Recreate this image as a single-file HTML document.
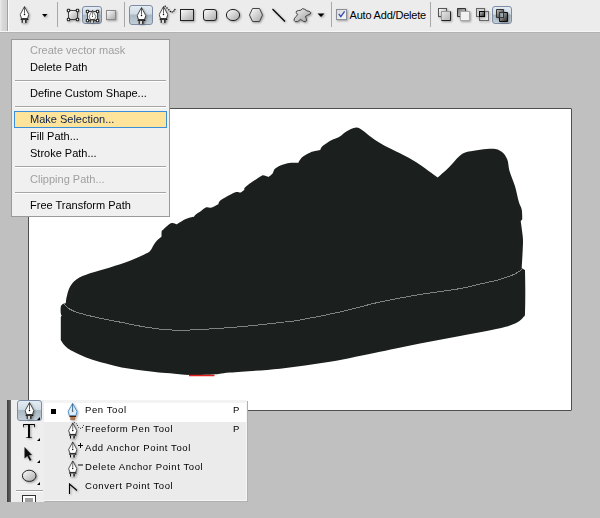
<!DOCTYPE html>
<html><head><meta charset="utf-8">
<style>
html,body{margin:0;padding:0;}
body{width:600px;height:518px;overflow:hidden;background:#c0c0c0;position:relative;font-family:"Liberation Sans",sans-serif;font-size:11px;color:#000;}
.abs{position:absolute;}
span,b{-webkit-font-smoothing:antialiased;will-change:transform;}
#toolbar{left:0;top:0;width:600px;height:31px;background:#ececec;border-bottom:1px solid #f6f6f6;}
#grip{left:0;top:0;width:7px;height:31px;background:linear-gradient(to right,#ececec 0,#dadada 2px,#d2d2d2 6px);}
#grip2{left:7px;top:0;width:1px;height:31px;background:#a2a2a2;}
#grip3{left:8px;top:0;width:1px;height:31px;background:#fafafa;}
.sep{position:absolute;top:2px;width:1px;height:25px;background:#a8a8a8;}
#canvas{left:28px;top:108px;width:542px;height:301px;background:#fff;border:1px solid #4f4f4f;border-radius:1px;}
#menu{left:11px;top:39px;width:157px;height:176px;background:#f0f0f0;border:1px solid #9a9a9a;}
.mi{position:absolute;left:0;width:156px;height:17px;line-height:17px;}
.mi span{position:absolute;left:17.5px;top:0;white-space:nowrap;}
.dis{color:#a0a0a0;}
.msep{position:absolute;left:3px;width:151px;height:1px;background:#a5a5a5;border-bottom:1px solid #fff;}
#hl{position:absolute;left:2px;top:71px;width:151px;height:15px;background:#fde49a;border:1px solid #3b8ed8;}
#tools{left:7px;top:400px;width:37px;height:102px;background:#eeeeee;}
#tstripe{left:7px;top:400px;width:4px;height:102px;background:linear-gradient(to right,#3c3c3c,#6a6a6a);}
#fly{left:44px;top:400px;width:203px;height:101px;background:#ebebeb;box-shadow:inset -1px -1px 0 #f6f6f6,1px 1px 0 #b0b0b0;}
.fi{position:absolute;left:0;width:203px;height:19px;font-size:9.5px;line-height:19px;}
.fi span{position:absolute;left:40.5px;top:-3px;white-space:nowrap;letter-spacing:0.6px;}
.fi b{position:absolute;left:189px;top:-3px;font-weight:normal;}
.btn{position:absolute;border:1px solid #7d8ca4;border-radius:3px;background:linear-gradient(to bottom,#e4ecf3 0,#d0dbe4 45%,#a9b8c3 50%,#c3ced6 100%);box-sizing:border-box;}
</style></head><body>
<svg width="0" height="0" style="position:absolute">
<defs>
<linearGradient id="gshape" x1="0" y1="0" x2="1" y2="1"><stop offset="0" stop-color="#ffffff"/><stop offset="1" stop-color="#a8a8a8"/></linearGradient>
<linearGradient id="gdark" x1="0" y1="0" x2="1" y2="1"><stop offset="0" stop-color="#c8c8c8"/><stop offset="1" stop-color="#202020"/></linearGradient>
<linearGradient id="gchk" x1="0" y1="0" x2="1" y2="1"><stop offset="0" stop-color="#d8d8d8"/><stop offset="1" stop-color="#fafafa"/></linearGradient>
<linearGradient id="gmid" x1="0" y1="0" x2="1" y2="1"><stop offset="0" stop-color="#e6e6e6"/><stop offset="1" stop-color="#b4b4b4"/></linearGradient>
<linearGradient id="gdark2" x1="0" y1="0" x2="1" y2="1"><stop offset="0" stop-color="#707070"/><stop offset="1" stop-color="#d8d8d8"/></linearGradient>
<linearGradient id="gblob" x1="0" y1="0" x2="1" y2="1"><stop offset="0" stop-color="#f4f4f4"/><stop offset="1" stop-color="#9a9a9a"/></linearGradient>
<filter id="sh" x="-30%" y="-30%" width="160%" height="160%"><feGaussianBlur in="SourceAlpha" stdDeviation="0.8"/><feOffset dx="1" dy="1"/><feComponentTransfer><feFuncA type="linear" slope="0.35"/></feComponentTransfer><feMerge><feMergeNode/><feMergeNode in="SourceGraphic"/></feMerge></filter>
<symbol id="pen" viewBox="0 0 10 17">
<path d="M5 0.5 L9.3 8.6 L7.9 12.6 L2.1 12.6 L0.7 8.6 Z" fill="#fff" stroke="#1a1a1a" stroke-width="0.75"/>
<path d="M5 1 V7.5" stroke="#1a1a1a" stroke-width="0.7"/>
<circle cx="5" cy="8.5" r="0.75" fill="#000"/>
<rect x="1.2" y="12.7" width="7.6" height="1.2" fill="#000"/>
<rect x="2.2" y="13.8" width="5.2" height="3.1" fill="#d8d8d8"/>
<rect x="2.2" y="13.8" width="1" height="3.1" fill="#000"/>
<rect x="5.6" y="13.8" width="1.6" height="3.1" fill="#222"/>
</symbol>
</defs>
</svg>

<div id="toolbar" class="abs"></div>
<div id="grip" class="abs"></div>
<div id="grip2" class="abs"></div>
<div id="grip3" class="abs"></div>
<div class="abs" style="left:0;top:32px;width:600px;height:1px;background:#b2b2b2"></div>
<div class="sep" style="left:57px"></div>
<div class="sep" style="left:124px"></div>
<div class="sep" style="left:331px"></div>
<div class="sep" style="left:430px"></div>
<div class="btn" style="left:82px;top:6px;width:20px;height:18px"></div>
<div class="btn" style="left:129px;top:5px;width:24px;height:20px"></div>
<div class="btn" style="left:492px;top:6px;width:20px;height:18px"></div>

<svg class="abs" style="left:0;top:0" width="600" height="32" viewBox="0 0 600 32">
<g filter="url(#sh)">
<use href="#pen" x="19.5" y="6" width="10" height="17"/>
<path d="M42 14 H47.5 L44.75 17 Z" fill="#000"/>
<!-- shape layers -->
<rect x="68.5" y="10.5" width="9" height="9" fill="url(#gshape)" stroke="#333" stroke-width="0.9"/>
<g fill="#fff" stroke="#262626" stroke-width="1.1"><rect x="67.3" y="9.3" width="2.4" height="2.4" rx=".8"/><rect x="76.3" y="9.3" width="2.4" height="2.4" rx=".8"/><rect x="67.3" y="18.3" width="2.4" height="2.4" rx=".8"/><rect x="76.3" y="18.3" width="2.4" height="2.4" rx=".8"/></g>
<!-- paths -->
<rect x="87.5" y="11.5" width="10" height="9" fill="#f4f4f4" stroke="#333" stroke-width="0.9"/>
<use href="#pen" x="88" y="9.8" width="9" height="13"/>
<g fill="#fff" stroke="#262626" stroke-width="1.1"><rect x="86.3" y="10.3" width="2.4" height="2.4" rx=".8"/><rect x="96.3" y="10.3" width="2.4" height="2.4" rx=".8"/><rect x="86.3" y="19.3" width="2.4" height="2.4" rx=".8"/><rect x="96.3" y="19.3" width="2.4" height="2.4" rx=".8"/></g>
<!-- fill pixels -->
<rect x="106.5" y="10.5" width="9" height="9" fill="url(#gshape)" stroke="#8a8a8a" stroke-width="1"/>
<use href="#pen" x="136.5" y="7" width="10" height="17"/>
<use href="#pen" x="158.5" y="6" width="10" height="17"/>
<g fill="#111"><circle cx="165.2" cy="6.3" r=".75"/><circle cx="167" cy="8.1" r=".75"/><circle cx="168.9" cy="9.8" r=".75"/><circle cx="170.4" cy="11.5" r=".75"/><circle cx="172.2" cy="12.1" r=".75"/><circle cx="173.8" cy="11.1" r=".75"/><circle cx="174.9" cy="9.5" r=".75"/></g>
<rect x="180.5" y="9.5" width="13" height="11" fill="url(#gshape)" stroke="#222" stroke-width="1"/>
<rect x="203.5" y="9.5" width="13" height="11" rx="2.5" fill="url(#gshape)" stroke="#222" stroke-width="1"/>
<ellipse cx="233" cy="15" rx="6.6" ry="5.6" fill="url(#gshape)" stroke="#222" stroke-width="1"/>
<path d="M252.5 8.5 H259.5 L262.5 15 L259.5 21.5 H252.5 L249.5 15 Z" fill="url(#gshape)" stroke="#444" stroke-width="1"/>
<path d="M272.5 9 L285 21.5" stroke="#000" stroke-width="1.2"/>
<path d="M296.5 11.2 Q298.5 10.4 300.8 10.2 Q302.5 7.4 304.8 9.4 Q306.2 11 309.8 11.6 Q311.8 12.8 310 14.2 Q307 15.2 305.4 16.5 Q307.6 20.3 305.4 21.8 Q303.6 22.2 300.6 19.4 Q297.5 22.6 295.2 21.6 Q293 20.6 294.6 18.2 Q296.4 16.4 297.6 14.6 Q295.4 12.2 296.5 11.2 Z" fill="url(#gblob)" stroke="#333" stroke-width="0.9"/>
<path d="M317.5 13.5 H324.5 L321 17 Z" fill="#000"/>
<!-- checkbox -->
<rect x="336.5" y="9.5" width="10" height="10" fill="url(#gchk)" stroke="#8a8f96" stroke-width="1"/>
<path d="M338.8 13.8 L340.8 16.6 L344.6 11.3" fill="none" stroke="#3048b0" stroke-width="1.3"/>
<!-- path ops -->
<rect x="438.5" y="8.5" width="8" height="8" fill="url(#gshape)" stroke="#555" stroke-width="1"/>
<rect x="441.5" y="11.5" width="9" height="9" fill="url(#gmid)" stroke="#9a9a9a" stroke-width="1"/>
<path d="M450.5 11.5 V20.5 H441.5" fill="none" stroke="#222" stroke-width="1"/>
<path d="M457.5 8.5 H465.5 V11.5 H460.5 V16.5 H457.5 Z" fill="url(#gdark2)" stroke="#333" stroke-width="1"/>
<rect x="460.5" y="11.5" width="9" height="9" fill="#f2f2f2" stroke="#a8a8a8" stroke-width="1"/>
<rect x="476.5" y="8.5" width="8" height="8" fill="none" stroke="#666" stroke-width="1"/>
<rect x="479.5" y="11.5" width="9" height="9" fill="none" stroke="#666" stroke-width="1"/>
<rect x="479.5" y="11.5" width="5" height="5" fill="url(#gdark)" stroke="#000" stroke-width="1"/>
<path d="M496.5 9.5 H503.5 V12.5 H499.5 V17.5 H496.5 Z" fill="url(#gdark)" stroke="#333" stroke-width="1"/>
<path d="M503.5 12.5 H507.5 V21.5 H499.5 V17.5 H503.5 Z" fill="url(#gdark)" stroke="#111" stroke-width="1"/>
<rect x="499.5" y="12.5" width="4" height="5" fill="none" stroke="#333" stroke-width="1"/>
</g>
</svg>
<div class="abs" style="left:349.5px;top:8px;line-height:14px;font-size:11px;white-space:nowrap;letter-spacing:-0.2px"><span>Auto Add/Delete</span></div>

<div id="canvas" class="abs"></div>
<svg class="abs" style="left:0;top:0" width="600" height="518" viewBox="0 0 600 518">
<path d="M65.8 303.3 C65.8 303.3 66.0 299.5 66.7 296.7 C67.4 293.9 68.3 289.6 70.0 286.7 C71.7 283.8 73.4 281.4 76.7 279.2 C80.0 277.0 84.5 275.2 90.0 273.3 C95.5 271.4 103.3 269.6 110.0 267.5 C116.7 265.4 123.9 263.2 130.0 260.8 C136.1 258.4 143.2 255.1 146.7 253.3 C150.2 251.5 149.7 251.3 150.8 250.0 C151.9 248.7 152.5 246.8 153.5 245.2 C154.5 243.6 155.7 242.0 157.0 240.6 C158.3 239.2 161.6 236.5 161.6 236.5 C161.6 236.5 161.4 233.5 161.6 232.4 C161.8 231.3 161.1 231.6 162.7 230.1 C164.2 228.6 168.6 224.2 170.9 223.2 C173.2 222.2 176.7 224.3 176.7 224.3 C176.7 224.3 179.6 222.4 181.3 221.4 C183.0 220.4 185.0 219.3 187.1 218.5 C189.2 217.7 194.0 216.8 194.0 216.8 C194.0 216.8 194.6 215.5 195.8 214.5 C197.0 213.5 199.3 212.2 201.0 211.0 C202.7 209.8 204.0 208.1 205.8 207.5 C207.6 206.9 209.5 208.1 211.6 207.5 C213.7 206.9 218.5 204.0 218.5 204.0 C218.5 204.0 218.2 201.9 220.9 200.0 C223.6 198.1 231.5 193.7 234.8 192.4 C238.1 191.1 239.0 192.9 240.6 192.4 C242.2 191.9 244.6 189.5 244.6 189.5 C244.6 189.5 243.2 188.9 245.8 186.7 C248.4 184.5 257.4 178.3 260.4 176.4 C263.4 174.5 262.5 175.3 263.9 175.4 C265.2 175.5 268.5 176.9 268.5 176.9 C268.5 176.9 271.5 174.8 272.6 173.5 C273.7 172.2 273.3 170.2 274.9 168.8 C276.5 167.4 280.0 165.8 282.4 164.8 C284.8 163.8 286.8 163.3 289.4 163.0 C292.0 162.7 298.1 163.0 298.1 163.0 C298.1 163.0 300.1 159.0 302.1 157.2 C304.2 155.4 307.4 153.6 310.4 152.4 C313.4 151.2 320.3 150.1 320.3 150.1 C320.3 150.1 320.8 147.7 322.6 146.1 C324.4 144.5 328.5 141.9 331.3 140.3 C334.1 138.8 337.1 138.2 339.4 136.8 C341.7 135.5 343.3 133.5 345.2 132.2 C347.1 130.9 349.1 129.8 351.0 129.0 C352.9 128.2 354.9 127.4 356.7 127.5 C358.5 127.6 359.2 128.0 361.7 129.7 C364.2 131.4 368.1 134.9 371.7 137.5 C375.3 140.1 378.6 142.4 383.3 145.0 C388.0 147.6 394.4 150.4 400.0 153.3 C405.6 156.2 412.0 159.6 416.7 162.5 C421.4 165.4 424.8 168.3 428.3 170.8 C431.8 173.3 437.6 177.6 437.6 177.6 C437.6 177.6 445.7 170.5 449.3 167.0 C452.9 163.5 455.8 159.0 459.0 156.4 C462.2 153.8 463.1 152.9 468.6 151.6 C474.1 150.3 486.3 148.7 491.8 148.7 C497.3 148.7 498.8 149.8 501.4 151.6 C504.0 153.4 505.8 156.1 507.2 159.3 C508.6 162.5 508.2 166.4 509.5 170.9 C510.8 175.4 513.5 181.2 515.0 186.3 C516.5 191.5 517.7 197.9 518.8 201.8 C519.9 205.7 521.1 206.6 521.7 209.5 C522.3 212.4 522.3 219.2 522.3 219.2 C522.3 219.2 520.7 221.1 520.7 221.1 C520.7 221.1 521.9 229.5 522.3 232.7 C522.7 235.8 522.9 237.1 523.0 240.0 C523.1 242.9 522.9 245.3 522.7 250.0 C522.5 254.7 521.7 268.3 521.7 268.3 C521.7 268.3 525.0 270.0 525.0 270.0 C525.0 270.0 525.3 282.8 525.3 290.0 C525.3 297.2 525.3 308.8 525.0 313.3 C524.7 317.8 524.8 315.5 523.5 317.0 C522.2 318.5 520.9 320.6 517.0 322.5 C513.1 324.4 509.5 325.9 500.0 328.2 C490.5 330.4 473.3 333.4 460.0 336.0 C446.7 338.6 433.3 340.9 420.0 343.5 C406.7 346.1 395.0 348.8 380.0 351.8 C365.0 354.9 346.7 359.0 330.0 361.8 C313.3 364.6 296.7 366.9 280.0 368.7 C263.3 370.5 241.1 371.6 230.0 372.6 C218.9 373.6 220.0 374.2 213.3 374.6 C206.6 375.0 197.2 375.2 190.0 375.0 C182.8 374.8 175.8 373.8 170.0 373.3 C164.2 372.8 160.3 372.6 155.0 372.0 C149.7 371.4 143.9 370.8 138.3 370.0 C132.8 369.2 127.2 368.6 121.7 367.5 C116.2 366.4 110.6 364.8 105.0 363.3 C99.4 361.8 93.8 360.4 88.3 358.3 C82.8 356.2 75.6 352.9 71.7 350.8 C67.8 348.7 66.8 347.6 65.0 345.8 C63.2 344.0 60.8 340.0 60.8 340.0 C60.8 340.0 60.8 317.0 60.8 317.0 C60.8 317.0 61.7 315.8 61.7 315.8 C61.7 315.8 60.9 314.8 60.8 313.3 C60.6 311.8 60.5 308.2 60.8 306.7 C61.1 305.2 61.7 304.8 62.5 304.2 C63.3 303.6 65.8 303.3 65.8 303.3Z" fill="#1b1f1e"/>
<path d="M64.5 304.5 C65.4 305.3 67.4 307.8 70.0 309.3 C72.6 310.8 75.0 311.8 80.0 313.3 C85.0 314.8 93.3 316.7 100.0 318.2 C106.7 319.7 113.3 320.8 120.0 322.1 C126.7 323.4 133.3 324.9 140.0 326.1 C146.7 327.3 153.3 328.4 160.0 329.1 C166.7 329.8 173.3 330.2 180.0 330.3 C186.7 330.4 193.3 329.8 200.0 329.5 C206.7 329.2 211.7 328.9 220.0 328.3 C228.3 327.7 240.0 326.8 250.0 325.8 C260.0 324.8 271.7 323.5 280.0 322.5 C288.3 321.5 290.0 321.8 300.0 320.0 C310.0 318.2 330.0 314.2 340.0 312.0 C350.0 309.8 353.3 308.7 360.0 307.0 C366.7 305.3 370.0 304.1 380.0 302.0 C390.0 299.9 406.7 296.7 420.0 294.5 C433.3 292.3 450.0 290.4 460.0 288.6 C470.0 286.9 473.3 285.5 480.0 284.0 C486.7 282.5 494.2 281.1 500.0 279.4 C505.8 277.7 511.3 275.6 515.0 273.9 C518.7 272.2 520.8 270.1 522.0 269.3" fill="none" stroke="#7f8281" stroke-width="1" shape-rendering="crispEdges"/>
<line x1="189" y1="375.5" x2="214.5" y2="375.5" stroke="#e02020" stroke-width="1.5"/>
</svg>

<div id="menu" class="abs">
<div class="mi dis" style="top:2px"><span>Create vector mask</span></div>
<div class="mi" style="top:19px"><span>Delete Path</span></div>
<div class="msep" style="top:40px"></div>
<div class="mi" style="top:45px"><span>Define Custom Shape...</span></div>
<div class="msep" style="top:66px"></div>
<div id="hl"></div>
<div class="mi" style="top:71px;color:#0c2148"><span>Make Selection...</span></div>
<div class="mi" style="top:88px"><span>Fill Path...</span></div>
<div class="mi" style="top:105px"><span>Stroke Path...</span></div>
<div class="msep" style="top:126px"></div>
<div class="mi dis" style="top:131px"><span>Clipping Path...</span></div>
<div class="msep" style="top:152px"></div>
<div class="mi" style="top:157px"><span>Free Transform Path</span></div>
</div>

<div id="tools" class="abs"></div>
<div id="tstripe" class="abs"></div>
<div class="btn" style="left:17px;top:400px;width:25px;height:21px"></div>
<div class="abs" style="left:16px;top:490px;width:27px;height:1px;background:#a0a0a0;border-bottom:1px solid #fff"></div>
<svg class="abs" style="left:0;top:400px" width="44" height="102" viewBox="0 400 44 102">
<g filter="url(#sh)">
<use href="#pen" x="24.5" y="402" width="10" height="17"/>
<text x="22.8" y="438" font-family="Liberation Serif" font-size="20" textLength="12.5" lengthAdjust="spacingAndGlyphs" fill="#000">T</text>
<path d="M24.5 447 L32 455 L28.8 455.3 L31.5 460 L29.8 460.8 L27.3 456 L24.5 458.5 Z" fill="#111"/>
<ellipse cx="29.2" cy="475.8" rx="6.8" ry="5.6" fill="url(#gshape)" stroke="#222" stroke-width="1"/>
</g>
<g fill="#000"><path d="M37 420 L40 417 V420 Z"/><path d="M37 441 L40 438 V441 Z"/><path d="M37 463 L40 460 V463 Z"/><path d="M37 485 L40 482 V485 Z"/></g>
<rect x="22.5" y="495.5" width="13" height="9" fill="#fff" stroke="#333"/>
<rect x="25" y="498.5" width="8" height="1" fill="#444"/><rect x="25" y="500.5" width="8" height="1" fill="#444"/>
</svg>

<div id="fly" class="abs">
<div class="abs" style="left:0;top:0;width:202px;height:3px;background:#f3f3f3"></div>
<div class="fi" style="top:3px;background:#fff;width:202px"><span>Pen Tool</span><b>P</b></div>
<div class="fi" style="top:22px"><span>Freeform Pen Tool</span><b>P</b></div>
<div class="fi" style="top:41px"><span>Add Anchor Point Tool</span></div>
<div class="fi" style="top:60px"><span>Delete Anchor Point Tool</span></div>
<div class="fi" style="top:79px"><span>Convert Point Tool</span></div>
</div>
<svg class="abs" style="left:44px;top:400px" width="203" height="102" viewBox="44 400 203 102">
<rect x="51" y="409" width="5" height="5" fill="#000"/>
<g filter="url(#sh)">
<path d="M72.6 403.3 L77 411.4 L75.8 415.8 L69.4 415.8 L68.2 411.4 Z" fill="#dcecf8" stroke="#3f86c0" stroke-width="0.9"/>
<path d="M72.6 404 V410" stroke="#1b4f7a" stroke-width="0.8"/><circle cx="72.6" cy="411" r="0.8" fill="#123"/>
<rect x="69.5" y="415.8" width="6.5" height="1.2" fill="#402010"/>
<rect x="70.3" y="417" width="4.8" height="3" fill="#b07850"/>
<use href="#pen" x="68" y="422" width="9.5" height="17"/>
<use href="#pen" x="68" y="441" width="9.5" height="17"/>
<use href="#pen" x="68" y="460" width="9.5" height="17"/>
<path d="M77 490.5 L69.5 484 V494" stroke="#000" stroke-width="1.1" fill="none"/>
</g>
<g fill="#1a1a1a"><circle cx="74.4" cy="422.6" r=".55"/><circle cx="76.3" cy="423.7" r=".55"/><circle cx="77.4" cy="425.4" r=".55"/><circle cx="78.7" cy="427.3" r=".55"/><circle cx="80.5" cy="428.3" r=".55"/><circle cx="82.4" cy="427.4" r=".55"/><circle cx="83.4" cy="425.5" r=".55"/></g>
<path d="M78 445.5 H83 M80.5 443 V448" stroke="#000" stroke-width="1"/>
<path d="M78 465 H83" stroke="#000" stroke-width="1"/>
</svg>
</body></html>
